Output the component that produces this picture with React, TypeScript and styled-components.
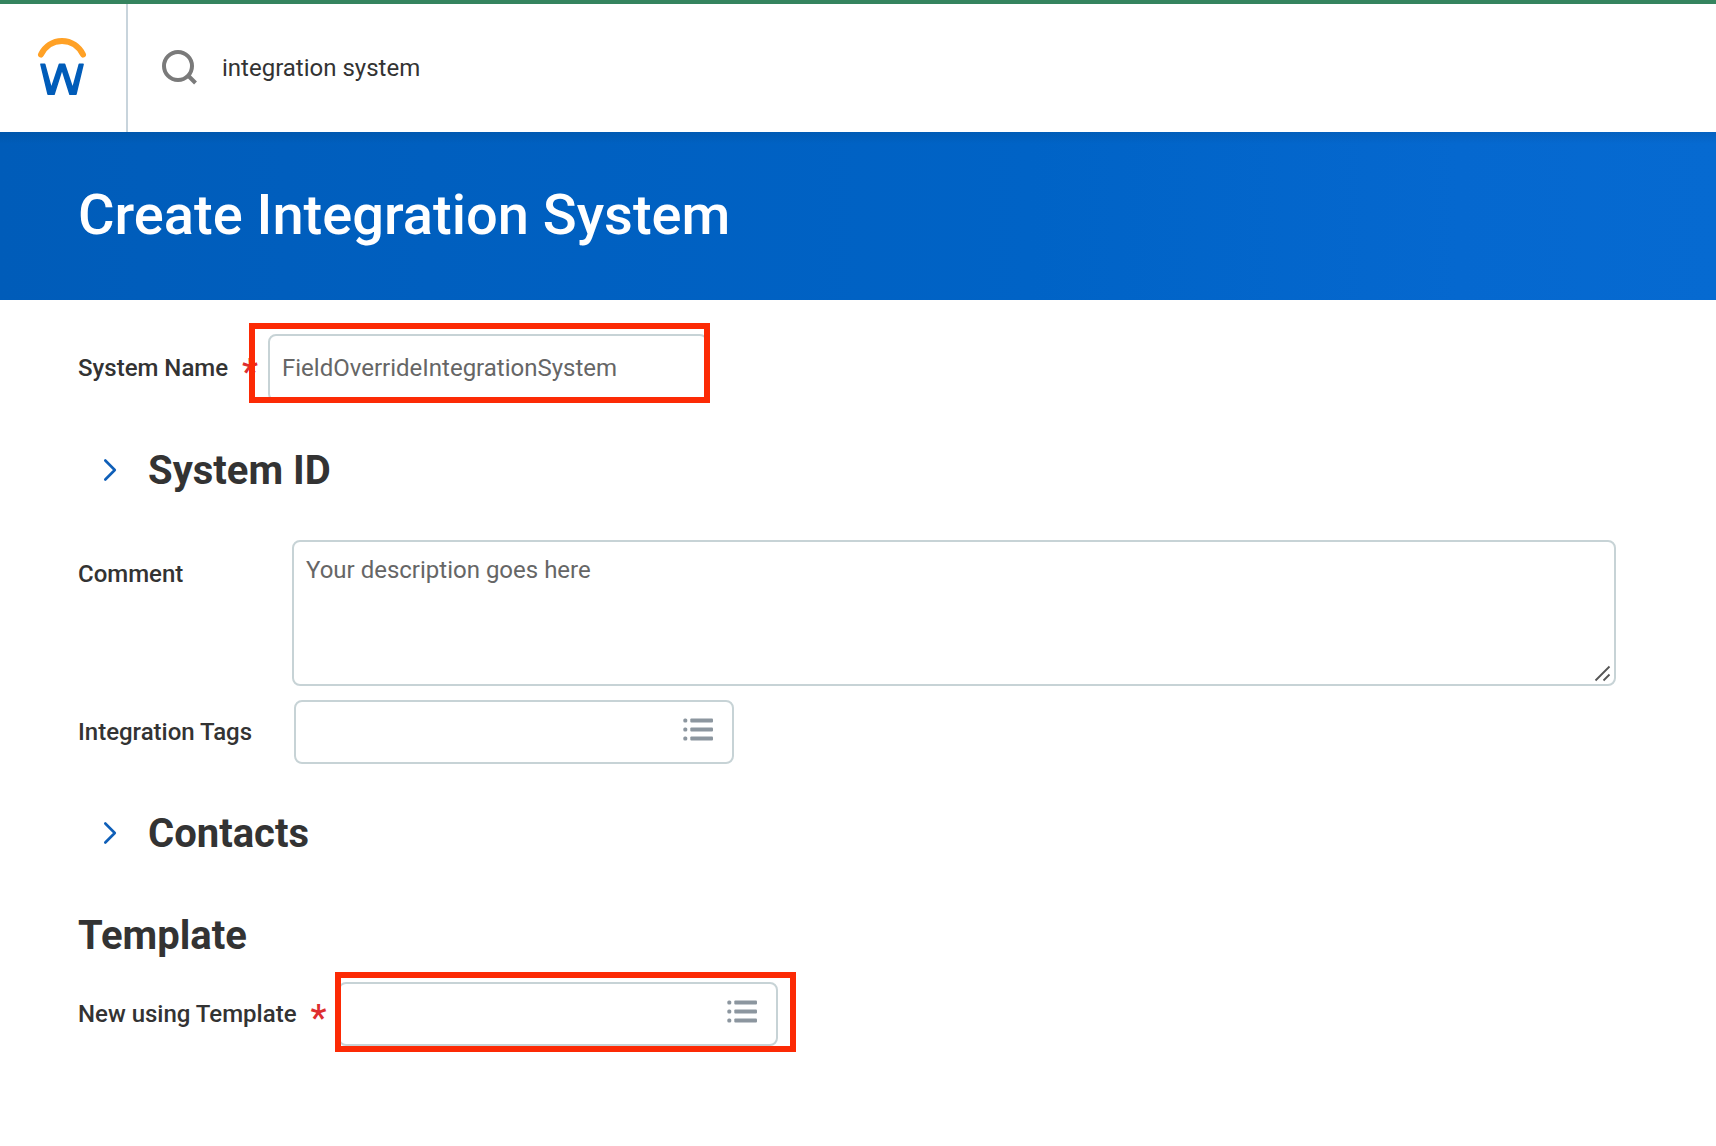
import React from "react";
import styled, { createGlobalStyle } from "styled-components";

const GlobalStyle = createGlobalStyle`
  *, *::before, *::after { box-sizing: border-box; }
  body {
    margin: 0;
    background: #fff;
    color: #333;
    font-family: Roboto, "Liberation Sans", sans-serif;
    font-size: 24px;
    line-height: 32px;
  }
`;

const Page = styled.div`
  min-height: 1146px;
  border-top: 4px solid #35845f;
`;

const TopBar = styled.header`
  display: flex;
  height: 128px;
  background: #fff;
`;

const LogoCell = styled.a`
  display: flex;
  width: 128px;
  padding: 32px 0 0 36px;
  border-right: 2px solid #c8d4dc;
`;

const SearchBox = styled.div`
  display: flex;
  flex: 1;
  align-items: center;
  padding-left: 34px;
  gap: 23px;
`;

const SearchText = styled.span`
  color: #333;
`;

const Banner = styled.div`
  display: flex;
  align-items: center;
  height: 168px;
  padding: 0 78px 2px;
  background: linear-gradient(180deg, rgba(0, 50, 90, 0.14), rgba(0, 50, 90, 0) 12px),
    linear-gradient(90deg, #005cb9 0%, #005fbf 25%, #0063c6 60%, #0568cf 85%, #066ad1 100%);
`;

const Title = styled.h1`
  margin: 0;
  color: #fff;
  font-size: 56px;
  font-weight: 500;
  line-height: 64px;
`;

const Form = styled.main`
  display: flex;
  flex-direction: column;
  padding: 34px 100px 0 78px;
`;

const Row = styled.div<{ $gapBelow?: number }>`
  display: flex;
  margin-bottom: ${(p) => p.$gapBelow ?? 0}px;
`;

const Label = styled.label<{ $width: number; $height: number }>`
  display: flex;
  align-items: center;
  gap: 14px;
  flex: none;
  width: ${(p) => p.$width}px;
  height: ${(p) => p.$height}px;
  font-weight: 500;
  white-space: nowrap;
`;

const Required = styled.span`
  height: 32px;
  padding-top: 4px;
  color: #de2e2f;
  font-size: 36px;
  font-weight: 500;
  line-height: 32px;
`;

const Field = styled.div<{ $height: number }>`
  position: relative;
  width: 440px;
  height: ${(p) => p.$height}px;
`;

const Box = styled.div`
  display: flex;
  align-items: center;
  width: 100%;
  height: 100%;
  padding: 0 19px 0 12px;
  border: 2px solid #c7d3d6;
  border-radius: 8px;
  background: #fff;
  color: #666;
`;

const PromptBox = styled(Box)`
  justify-content: flex-end;
  padding-bottom: 5px;
`;

const Highlight = styled.div<{ $left: number; $top: number }>`
  position: absolute;
  left: ${(p) => p.$left}px;
  top: ${(p) => p.$top}px;
  width: 461px;
  height: 80px;
  border: 6px solid #fc2a05;
`;

const CommentBox = styled.div`
  position: relative;
  flex: none;
  width: 1324px;
  height: 146px;
  padding: 12px;
  border: 2px solid #c7d3d6;
  border-radius: 8px;
  background: #fff;
  color: #666;
`;

const Grip = styled.svg`
  position: absolute;
  right: 2px;
  bottom: 2px;
`;

const Section = styled.button<{ $height: number }>`
  display: flex;
  align-items: center;
  gap: 30px;
  height: ${(p) => p.$height}px;
  padding: 0 0 0 24px;
  border: 0;
  background: none;

  svg {
    margin-bottom: 2px;
  }
`;

const Heading = styled.h2`
  margin: 0;
  color: #333;
  font-family: Roboto, "Liberation Sans", sans-serif;
  font-size: 40px;
  font-weight: 700;
  line-height: 48px;
`;

const TemplateHeading = styled(Heading)`
  margin-bottom: 14px;
  line-height: 64px;
`;

const Logo = () => (
  <svg width="52" height="62" viewBox="0 0 52 62" fill="none">
    <path d="M5 18.500C9 10.500 16.500 5 26 5s17 5.500 21 13.500" stroke="#ffa126" strokeWidth="6" strokeLinecap="round" />
    <path
      d="M4.900 28.300H8.700L15.300 52.500L23.400 28.300H28.600L36.700 52.500L43.300 28.300H47.100L40 58.200H33.900L26 33.200L18.100 58.200H12Z"
      fill="#005cb9"
      stroke="#005cb9"
      strokeWidth="1.500"
      strokeLinejoin="round"
    />
  </svg>
);

const SearchIcon = () => (
  <svg width="37" height="36" viewBox="0 0 37 36" fill="none" stroke="#7a7a7a" strokeWidth="4">
    <circle cx="16" cy="16" r="14" />
    <path d="M26 25.500L33.500 33" />
  </svg>
);

const Chevron = () => (
  <svg width="16" height="24" viewBox="0 0 16 24" fill="none" stroke="#0f5fb8" strokeWidth="2.600" strokeLinecap="round" strokeLinejoin="round">
    <path d="M3.300 2.500L12.800 12L3.300 21.500" />
  </svg>
);

const ListIcon = () => (
  <svg width="30" height="23" viewBox="0 0 30 23" fill="#8c969f">
    {[0.5, 9.5, 18.5].map((y) => (
      <g key={y}>
        <rect x="0.300" y={y} width="4" height="4" rx="1.600" />
        <rect x="7.300" y={y} width="22.700" height="4" rx="1" />
      </g>
    ))}
  </svg>
);

export default function App() {
  return (
    <>
      <GlobalStyle />
      <Page>
        <TopBar>
          <LogoCell>
            <Logo />
          </LogoCell>
          <SearchBox>
            <SearchIcon />
            <SearchText>integration system</SearchText>
          </SearchBox>
        </TopBar>
        <Banner>
          <Title>Create Integration System</Title>
        </Banner>
        <Form>
          <Row>
            <Label $width={190} $height={68}>
              System Name<Required>*</Required>
            </Label>
            <Field $height={68}>
              <Box>FieldOverrideIntegrationSystem</Box>
              <Highlight $left={-19} $top={-11} />
            </Field>
          </Row>
          <Section $height={138}>
            <Chevron />
            <Heading>System ID</Heading>
          </Section>
          <Row $gapBelow={14}>
            <Label $width={214} $height={68}>Comment</Label>
            <CommentBox>
              Your description goes here
              <Grip width="18" height="18" viewBox="0 0 18 18" stroke="#555" strokeWidth="1.800">
                <path d="M1.500 16.500L15.500 2.500M9.500 16.500L15.500 10.500" />
              </Grip>
            </CommentBox>
          </Row>
          <Row>
            <Label $width={216} $height={64}>Integration Tags</Label>
            <Field $height={64}>
              <PromptBox>
                <ListIcon />
              </PromptBox>
            </Field>
          </Row>
          <Section $height={140}>
            <Chevron />
            <Heading>Contacts</Heading>
          </Section>
          <TemplateHeading>Template</TemplateHeading>
          <Row>
            <Label $width={260} $height={64}>
              New using Template<Required>*</Required>
            </Label>
            <Field $height={64}>
              <PromptBox>
                <ListIcon />
              </PromptBox>
              <Highlight $left={-3} $top={-10} />
            </Field>
          </Row>
        </Form>
      </Page>
    </>
  );
}
